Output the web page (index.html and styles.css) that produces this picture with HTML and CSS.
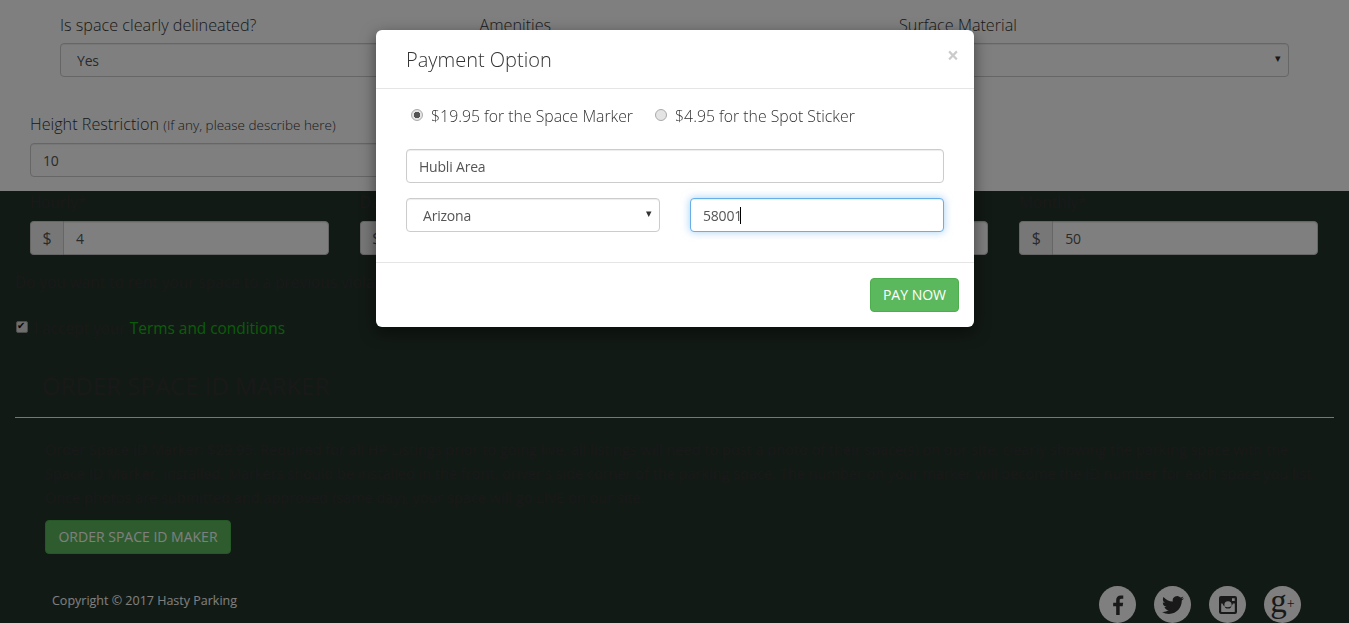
FILE: index.html
```html
<!DOCTYPE html>
<html lang="en">
<head>
  <meta charset="UTF-8">
  <meta name="viewport" content="width=device-width, initial-scale=1.0">
  <title>Hasty Parking - List Your Space</title>
  <link rel="stylesheet" href="styles.css">
</head>
<body>

  <section class="top-form">
    <div class="row-three">
      <div>
        <label class="field-label">Is space clearly delineated?</label>
        <div class="select-wrap">
          <select class="form-control"><option>Yes</option></select>
        </div>
      </div>
      <div>
        <label class="field-label">Amenities</label>
        <div class="select-wrap">
          <select class="form-control"><option>None</option></select>
        </div>
      </div>
      <div>
        <label class="field-label">Surface Material</label>
        <div class="select-wrap">
          <select class="form-control"><option>Asphalt</option></select>
        </div>
      </div>
    </div>
    <div class="row-height">
      <label class="field-label">Height Restriction <small>(If any, please describe here)</small></label>
      <input class="form-control" type="text" value="10">
    </div>
  </section>

  <section class="dark-part">
    <div class="row-prices">
      <div>
        <label class="field-label">Hourly*</label>
        <div class="input-group"><span class="addon">$</span><input class="form-control" type="text" value="4"></div>
      </div>
      <div>
        <label class="field-label">Daily*</label>
        <div class="input-group"><span class="addon">$</span><input class="form-control" type="text" value="10"></div>
      </div>
      <div>
        <label class="field-label">Weekly*</label>
        <div class="input-group"><span class="addon">$</span><input class="form-control" type="text" value="25"></div>
      </div>
      <div>
        <label class="field-label">Monthly*</label>
        <div class="input-group"><span class="addon">$</span><input class="form-control" type="text" value="50"></div>
      </div>
    </div>

    <p class="violator">Do you want to rent your space to a previous violator?</p>

    <label class="accept"><input type="checkbox" checked> I accept your <a href="#">Terms and conditions</a></label>

    <h3 class="order-title">ORDER SPACE ID MARKER</h3>
    <hr class="divider">
    <p class="order-text">
      Order Space ID Marker: $29.95. Required for all HP Listings prior to going live, all listings will need to post a photo of their space(s) on our site, clearly showing the parking space with the<br>
      Space ID Marker, installed. Markers should be installed in the front, driver's side corner of the parking space. The number on your marker will become the ID number for each space you list.<br>
      Once photos are submitted and approved (same day), your space will go LIVE on our site.
    </p>
    <button class="btn-green order-btn" type="button">ORDER SPACE ID MAKER</button>

    <footer class="footer">
      <span class="copyright">Copyright © 2017 Hasty Parking</span>
      <div class="social">
        <a href="#" class="social-icon">
          <svg width="20" height="20" viewBox="0 0 24 24"><path d="M14 24V13.4h3.6l.6-4.2H14V6.6c0-1.2.4-2.1 2.100-2.100h2.200V.7C17.900.6 16.600.500 15.200.500c-3.200 0-5.400 2-5.400 5.600v3.100H6.200v4.200h3.600V24z"/></svg>
        </a>
        <a href="#" class="social-icon">
          <svg width="22" height="22" viewBox="0 0 24 24"><path d="M23.953 4.57a10 10 0 01-2.825.775 4.958 4.958 0 002.163-2.723c-.951.555-2.005.959-3.127 1.184a4.92 4.92 0 00-8.384 4.482C7.69 8.095 4.067 6.13 1.64 3.162a4.822 4.822 0 00-.666 2.475c0 1.71.87 3.213 2.188 4.096a4.904 4.904 0 01-2.228-.616v.06a4.923 4.923 0 003.946 4.827 4.996 4.996 0 01-2.212.085 4.936 4.936 0 004.604 3.417 9.867 9.867 0 01-6.102 2.105c-.39 0-.779-.023-1.17-.067a13.995 13.995 0 007.557 2.209c9.053 0 13.998-7.496 13.998-13.985 0-.21 0-.42-.015-.63A9.935 9.935 0 0024 4.59z"/></svg>
        </a>
        <a href="#" class="social-icon">
          <svg width="18" height="18" viewBox="0 0 18 18"><path fill-rule="evenodd" d="M2 0h14a2 2 0 012 2v14a2 2 0 01-2 2H2a2 2 0 01-2-2V2a2 2 0 012-2zm11 2.300v2.700h2.700V2.300zM2.200 7.500v8a.4.400 0 00.4.4h12.800a.4.400 0 00.4-.4v-8h-1.800a5.600 5.600 0 01-10.600 0zM9 5.300a3.600 3.600 0 100 7.200 3.600 3.600 0 000-7.200z"/></svg>
        </a>
        <a href="#" class="social-icon gplus">g<span class="plus">+</span></a>
      </div>
    </footer>
  </section>

  <div class="backdrop"></div>

  <div class="modal">
    <div class="modal-header">
      <h4>Payment Option</h4>
      <span class="close">×</span>
    </div>
    <div class="modal-body">
      <div class="radios">
        <label><input type="radio" name="opt" checked> $19.95 for the Space Marker</label>
        <label><input type="radio" name="opt"> $4.95 for the Spot Sticker</label>
      </div>
      <input class="form-control address" type="text" value="Hubli Area">
      <div class="state-zip">
        <div class="select-wrap">
          <select class="form-control"><option>Arizona</option></select>
        </div>
        <div class="zip-wrap">
          <input class="form-control zip" type="text" value="58001">
          <span class="caret"></span>
        </div>
      </div>
    </div>
    <div class="modal-footer">
      <button class="btn-green" type="button">PAY NOW</button>
    </div>
  </div>

</body>
</html>
```

FILE: styles.css
```css
* {
  box-sizing: border-box;
}
html, body {
  height: 623px;
  overflow: hidden;
}
body {
  margin: 0;
  background-color: #fff;
  color: #333;
  font-family: 'Open Sans', 'Noto Sans', sans-serif;
  font-size: 16px;
  font-weight: 300;
}
.field-label {
  display: block;
  font-size: 16.2px;
  line-height: 22px;
  margin-bottom: 7px;
}
.field-label small {
  font-size: 13.5px;
}
.form-control {
  display: block;
  width: 100%;
  height: 34px;
  padding: 6px 12px;
  background: #fff;
  border: 1px solid #ccc;
  border-radius: 4px;
  color: #555;
  font-family: inherit;
  font-size: 14px;
  font-weight: 400;
  letter-spacing: -0.2px;
  box-shadow: inset 0 1px 1px rgba(0, 0, 0, 0.075);
}
select.form-control {
  appearance: none;
  padding-left: 16px;
}
.select-wrap {
  position: relative;
}
.select-wrap::after {
  content: "▾";
  position: absolute;
  right: 8px;
  top: 7px;
  font-size: 11px;
  color: #333;
}

.top-form {
  height: 191px;
  padding-top: 14px;
}
.row-three {
  display: grid;
  grid-template-columns: repeat(3, 390px);
  column-gap: 29.5px;
  padding-left: 60px;
}
.row-height {
  width: 620px;
  margin: 36px 0 0 30px;
}

.dark-part {
  height: 432px;
  background-color: #24342a;
  padding: 1px 15px 0;
  font-weight: 400;
}
.row-prices {
  display: grid;
  grid-template-columns: repeat(4, 1fr);
  column-gap: 31px;
  padding: 0 16px 0 15px;
}
.dark-part .field-label {
  font-size: 15.4px;
}
.input-group {
  display: flex;
}
.addon {
  width: 33px;
  flex: none;
  background: #eee;
  border: 1px solid #ccc;
  border-right: none;
  border-radius: 4px 0 0 4px;
  color: #555;
  font-size: 16px;
  font-weight: 400;
  line-height: 32px;
  text-align: center;
}
.input-group .form-control {
  border-radius: 0 4px 4px 0;
}
.violator {
  margin: 17px 0 0;
  line-height: 22px;
  font-size: 15.4px;
}
.accept {
  display: block;
  margin-top: 23px;
  font-size: 15.4px;
  line-height: 24px;
}
.accept input {
  appearance: none;
  width: 12px;
  height: 12px;
  margin: 0 2px 0 1px;
  vertical-align: 1px;
  background: #ddd;
  border: 1px solid #999;
  border-radius: 2px;
  position: relative;
}
.accept input::after {
  content: "✔";
  position: absolute;
  left: 0;
  top: -3px;
  font-size: 10px;
  line-height: 14px;
  color: #111;
}
.accept a {
  color: #14b914;
  text-decoration: none;
}
.order-title {
  margin: 29px 0 0 27px;
  font-size: 24px;
  font-weight: 400;
  line-height: 32px;
}
.divider {
  margin: 15px 0 0;
  border: 0;
  border-top: 1px solid #eee;
}
.order-text {
  margin: 20px 0 0 30px;
  font-size: 14.5px;
  line-height: 24px;
  white-space: nowrap;
}
.btn-green {
  height: 34px;
  padding: 0 12px 2px;
  background-color: #5cb85c;
  border: 1px solid #4cae4c;
  border-radius: 4px;
  color: #fff;
  font-family: inherit;
  font-size: 14px;
}
.order-btn {
  display: block;
  width: 186px;
  margin: 10px 0 0 30px;
  padding: 0 0 2px;
}
.footer {
  display: flex;
  justify-content: space-between;
  margin-top: 32px;
  padding: 0 33px 0 37px;
}
.copyright {
  color: #fff;
  font-size: 12.5px;
  font-weight: 400;
  line-height: 30px;
}
.social {
  display: flex;
  gap: 18px;
}
.social-icon {
  display: flex;
  align-items: center;
  justify-content: center;
  width: 37px;
  height: 37px;
  background: #fff;
  border-radius: 50%;
  color: #333;
  text-decoration: none;
}
.social-icon svg {
  fill: #333;
}
.gplus {
  font-family: 'Liberation Serif', serif;
  font-size: 33px;
  font-weight: 400;
  line-height: 30px;
  padding-bottom: 8px;
}
.plus {
  font-size: 14px;
  margin-top: 6px;
}

.backdrop {
  position: fixed;
  inset: 0;
  background: rgba(0, 0, 0, 0.5);
}
.modal {
  position: absolute;
  left: 376px;
  top: 30px;
  width: 598px;
  height: 297px;
  background: #fff;
  border-radius: 6px;
  box-shadow: 0 5px 15px rgba(0, 0, 0, 0.5);
}
.modal-header {
  position: relative;
  height: 59px;
  padding: 15px 30px 0;
  border-bottom: 1px solid #e5e5e5;
}
.modal-header h4 {
  margin: 0;
  font-size: 20px;
  font-weight: 300;
  line-height: 30px;
}
.close {
  position: absolute;
  right: 15px;
  top: 15px;
  color: #000;
  opacity: 0.2;
  font-size: 21px;
  font-weight: 700;
  line-height: 21px;
}
.modal-body {
  height: 173px;
  padding: 15px 30px 0;
}
.radios {
  display: flex;
  gap: 22px;
  padding-left: 5px;
  font-size: 15.8px;
  line-height: 24px;
}
.radios input {
  appearance: none;
  width: 12px;
  height: 12px;
  margin: 0 4px 0 0;
  vertical-align: 1px;
  background: #e4e4e4;
  border: 1px solid #aaa;
  border-radius: 50%;
}
.radios input:checked {
  background: radial-gradient(circle, #555 0, #555 3px, #e4e4e4 3.5px);
}
.address {
  margin-top: 21px;
}
.state-zip {
  display: grid;
  grid-template-columns: 254px 254px;
  column-gap: 30px;
  margin-top: 15px;
}
.zip-wrap {
  position: relative;
}
.zip {
  border-color: #66afe9;
  box-shadow: inset 0 1px 1px rgba(0, 0, 0, 0.075), 0 0 8px rgba(102, 175, 233, 0.6);
}
.caret {
  position: absolute;
  left: 50px;
  top: 9px;
  width: 1px;
  height: 17px;
  background: #000;
}
.modal-footer {
  padding: 15px 15px 0;
  border-top: 1px solid #e5e5e5;
  text-align: right;
}
```
